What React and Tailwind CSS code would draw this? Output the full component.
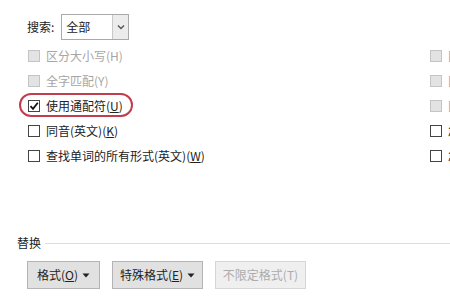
import React from "react";

const font = { fontFamily: '"Noto Sans CJK SC", "Noto Sans", sans-serif' };

function Box({ checked, disabled }) {
  if (disabled) {
    return <span className="w-[12px] h-[12px] border border-[#c4c4c4] bg-[#e3e3e3] shrink-0" />;
  }
  return (
    <span className="w-[12px] h-[12px] border border-[#444] bg-white shrink-0 flex items-center justify-center">
      {checked && (
        <svg width="10" height="10" viewBox="0 0 10 10">
          <path d="M1.5 5.2 L4 7.8 L8.8 1.8" fill="none" stroke="#111" strokeWidth="1.8" />
        </svg>
      )}
    </span>
  );
}

function Row({ label, mn, tail, checked, disabled, circled }) {
  return (
    <div className="relative h-[25px] flex items-center gap-[6px] whitespace-nowrap">
      <Box checked={checked} disabled={disabled} />
      <span className={disabled ? "text-[#a6a6a6]" : "text-[#222]"}>
        {label}
        {mn ? (
          <>
            (<span className="underline">{mn}</span>)
          </>
        ) : null}
        {tail}
      </span>
      {circled && (
        <span className="absolute left-[-9px] top-[0px] w-[114px] h-[24px] rounded-full border-2 border-[#c23d4d]" />
      )}
    </div>
  );
}

export default function App() {
  return (
    <div className="w-[450px] h-[300px] bg-white overflow-hidden text-[12px] leading-none" style={font}>
      <div className="pt-[14px] pl-[27px] flex items-center gap-[7px]">
        <span className="text-[#222]">搜索:</span>
        <div className="w-[68px] h-[26px] border border-[#a9a9a9] flex">
          <div className="flex-1 flex items-center pl-[4px] text-[#222]">全部</div>
          <div className="w-[16px] border-l border-[#c8c8c8] bg-[#ececec] flex items-center justify-center">
            <svg width="8" height="6" viewBox="0 0 8 6">
              <path d="M1 1.5 L4 4.5 L7 1.5" fill="none" stroke="#555" strokeWidth="1.4" />
            </svg>
          </div>
        </div>
      </div>
      <div className="flex mt-[3px] overflow-hidden">
        <div className="pl-[28px] w-[430px] shrink-0 flex flex-col">
          <Row label="区分大小写(H)" disabled />
          <Row label="全字匹配(Y)" disabled />
          <Row label="使用通配符" mn="U" checked circled />
          <Row label="同音(英文)" mn="K" />
          <Row label="查找单词的所有形式(英文)" mn="W" />
        </div>
        <div className="flex flex-col shrink-0">
          <Row label="区分前缀" disabled />
          <Row label="区分后缀" disabled />
          <Row label="区分全/半角" disabled />
          <Row label="忽略标点符号" />
          <Row label="忽略空格" />
        </div>
      </div>
      <div className="mt-[69px] pl-[17px] flex items-center gap-[4px]">
        <span className="text-[#222]">替换</span>
        <div className="flex-1 h-px bg-[#dcdcdc]" />
      </div>
      <div className="mt-[12px] pl-[27px] flex gap-[12px]">
        <button className="w-[73px] h-[28px] bg-[#e1e1e1] border border-[#b4b4b4] text-[#222] flex items-center justify-center gap-[4px]">
          <span>格式(<span className="underline">O</span>)</span>
          <svg width="8" height="5" viewBox="0 0 8 5"><path d="M0.5 0.5 L7.5 0.5 L4 4.5 Z" fill="#222" /></svg>
        </button>
        <button className="w-[91px] h-[28px] bg-[#e1e1e1] border border-[#b4b4b4] text-[#222] flex items-center justify-center gap-[4px]">
          <span>特殊格式(<span className="underline">E</span>)</span>
          <svg width="8" height="5" viewBox="0 0 8 5"><path d="M0.5 0.5 L7.5 0.5 L4 4.5 Z" fill="#222" /></svg>
        </button>
        <button className="w-[91px] h-[28px] bg-[#efefef] border border-[#d6d6d6] text-[#acacac] flex items-center justify-center">
          不限定格式(T)
        </button>
      </div>
    </div>
  );
}
